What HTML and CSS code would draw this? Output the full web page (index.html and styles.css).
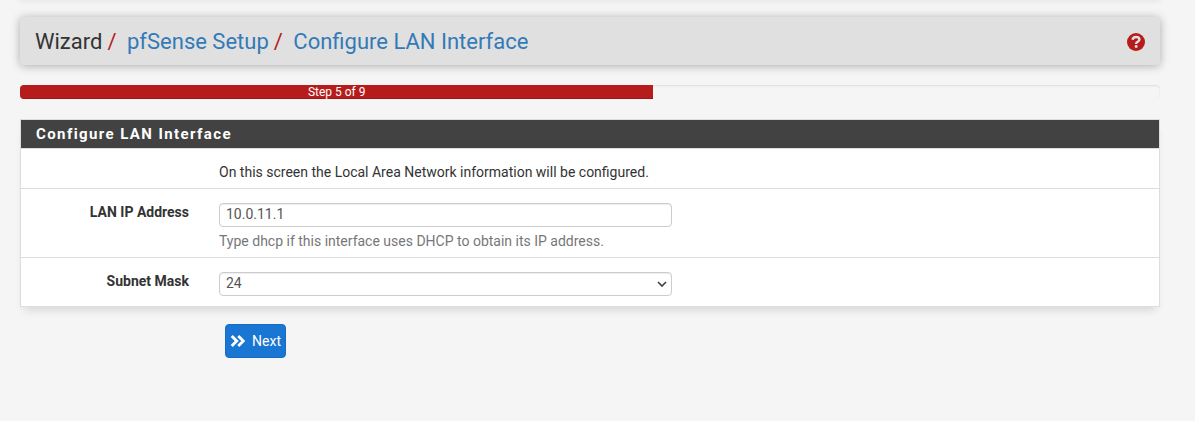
FILE: index.html
```
<!DOCTYPE html>
<html lang="en">
<head>
<meta charset="utf-8">
<title>Wizard: pfSense Setup: Configure LAN Interface</title>
<link rel="stylesheet" href="styles.css">
</head>
<body>
<div class="navbar-edge"></div>
<main class="container">
  <header class="page-header">
    <nav class="crumbs"><span class="crumb">Wizard</span><span class="slash">/</span><a class="crumb link setup">pfSense Setup</a><span class="slash">/</span><a class="crumb link">Configure LAN Interface</a></nav>
    <svg class="help" viewBox="0 0 512 512"><path fill="#b71c1c" d="M256 0a256 256 0 1 1 0 512a256 256 0 1 1 0-512z"/><path fill="none" stroke="#e0e0e0" stroke-width="68" stroke-linejoin="round" d="M158 192c8-48 46-78 98-78c60 0 98 32 98 74c0 62-94 56-94 112v12"/><circle cx="260" cy="386" r="42" fill="#e0e0e0"/></svg>
  </header>
  <div class="progress"><div class="progress-bar" style="width:55.56%"><span class="step">Step 5 of 9</span></div></div>
  <form class="panel">
    <h2 class="panel-heading">Configure LAN Interface</h2>
    <div class="row intro"><div class="label"></div><div class="field"><span class="text">On this screen the Local Area Network information will be configured.</span></div></div>
    <div class="row address"><div class="label">LAN IP Address</div><div class="field"><div class="control">10.0.11.1</div><div class="hint">Type dhcp if this interface uses DHCP to obtain its IP address.</div></div></div>
    <div class="row mask"><div class="label">Subnet Mask</div><div class="field"><div class="control select"><span>24</span><svg class="chevron" viewBox="0 0 10 6"><path d="M1 1l4 4l4-4" fill="none" stroke="#444" stroke-width="1.7"/></svg></div></div></div>
  </form>
  <button class="next" type="button"><svg class="arrows" viewBox="0 0 15 14"><path d="M1.700 2L6.700 7l-5 5M8.300 2L13.300 7l-5 5" fill="none" stroke="#fff" stroke-width="2.900"/></svg><span class="next-text">Next</span></button>
</main>
</body>
</html>
```
FILE: styles.css
```
* { box-sizing: border-box; }
body { margin: 0; height: 421px; overflow: hidden; background: #f5f5f5; color: #333; font: 14px/20px Roboto, sans-serif; }
.navbar-edge { height: 0; margin: 0 35px 0 20px; box-shadow: 0 0 5px 1px rgba(0,0,0,.12); }
.container { margin: 17px 35px 0 20px; }
.page-header { display: flex; align-items: center; justify-content: space-between; height: 48px; padding: 2px 15px 0; background: #e0e0e0; border-radius: 3px; box-shadow: 0 1px 10px rgba(0,0,0,.3); }
.crumbs { display: flex; font-size: 22px; line-height: 26px; white-space: nowrap; }
.slash { color: #b71c1c; margin: 0 10.5px 0 5px; }
.link { color: #337ab7; }
.help { width: 18px; height: 18px; }
.progress { height: 14px; margin-top: 20px; border-radius: 4px; overflow: hidden; background: #f5f5f5; box-shadow: inset 0 1px 2px rgba(0,0,0,.1); }
.progress-bar { height: 14px; background: #b71c1c; box-shadow: inset 0 -1px 0 rgba(0,0,0,.15); color: #fff; font-size: 12px; line-height: 14px; text-align: center; }
.panel { margin: 20px 0 0; height: 188px; background: #fff; border: 1px solid #ddd; box-shadow: 0 7px 9px -4px rgba(0,0,0,.13); }
.panel-heading { margin: 0; height: 29px; padding: 0 15px; background: #424242; border-bottom: 1px solid #ddd; color: #fff; font-size: 15px; font-weight: 700; line-height: 28px; letter-spacing: 1.4px; }
.row { display: flex; border-bottom: 1px solid #ddd; }
.intro { height: 40px; padding-top: 13px; }
.address { height: 69px; padding-top: 14px; }
.mask { height: 48px; padding-top: 14px; border: 0; }
.label { width: 168px; margin-right: 30px; text-align: right; font-weight: 700; line-height: 18px; }
.field { width: 453px; white-space: nowrap; }
.control { height: 24px; border: 1px solid #ccc; border-radius: 4px; padding: 0 6px; line-height: 21px; color: #555; box-shadow: inset 0 1px 1px rgba(0,0,0,.075); }
.select { display: flex; align-items: flex-start; justify-content: space-between; padding-right: 4px; }
.chevron { width: 10px; height: 6px; margin-top: 8px; }
.hint { margin-top: 4px; line-height: 20px; color: #777; }
.next { display: flex; align-items: center; justify-content: space-between; width: 61px; height: 34px; margin: 17px 0 0 205px; padding: 0 4px; border: 1px solid #176bc4; border-radius: 4px; background: #1976d2; color: #fff; font: 14px/20px Roboto, sans-serif; }
.next-text { padding-bottom: 1px; }
.arrows { width: 15px; height: 14px; }
```
